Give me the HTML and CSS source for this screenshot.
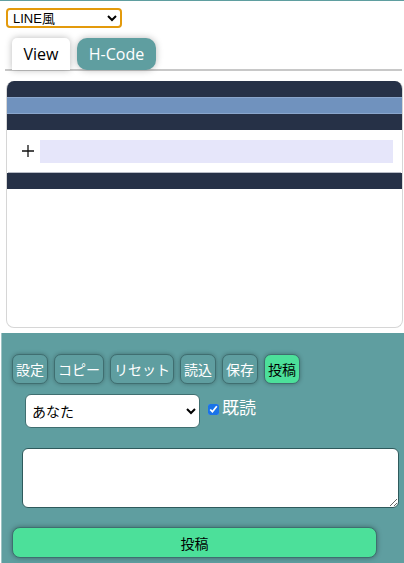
FILE: index.html
```html
<!DOCTYPE html>
<html lang="ja">
<head>
<meta charset="utf-8">
<link rel="stylesheet" href="styles.css">
</head>
<body>
<div class="topline"></div>
<select class="style-select"><option>LINE風</option></select>
<div class="tabs">
  <div class="tab tab-view">View</div>
  <div class="tab tab-code">H-Code</div>
</div>
<div class="panel">
  <div class="band dark"></div>
  <div class="band blue"></div>
  <div class="band dark"></div>
  <div class="row">
    <svg class="plus" width="12" height="12" viewBox="0 0 12 12"><path d="M6 0v12M0 6h12" stroke="#111" stroke-width="1.3" fill="none"/></svg>
    <div class="field"></div>
  </div>
  <div class="band dark"></div>
</div>
<div class="controls">
  <div class="btns">
    <button class="btn">設定</button>
    <button class="btn">コピー</button>
    <button class="btn">リセット</button>
    <button class="btn">読込</button>
    <button class="btn">保存</button>
    <button class="btn green">投稿</button>
  </div>
  <div class="who">
    <select class="who-select"><option>あなた</option></select>
    <label class="read"><input type="checkbox" checked>既読</label>
  </div>
  <textarea class="msg"></textarea>
  <button class="post">投稿</button>
</div>
</body>
</html>
```
FILE: styles.css
```css
* { box-sizing: border-box; }
html, body { margin: 0; padding: 0; background: #fff; }
body { font-family: "Segoe UI", "Open Sans", "Noto Sans CJK JP", sans-serif; width: 404px; height: 563px; overflow: hidden; }
.topline { height: 1px; background: #5f9ea0; }
.style-select {
  display: block; margin: 7px 0 0 6px; width: 116px; height: 20px;
  border: 2px solid #e39a0c; border-radius: 4px; background: #fff;
  font: 13px "Liberation Sans", "Noto Sans CJK JP", sans-serif; color: #000; padding: 0 1px;
}
.tabs {
  display: flex; gap: 7px; margin: 10px 2px 0 5px; padding-left: 7px;
  border-bottom: 2px solid #c8c8c8; height: 33px;
}
.tab { height: 32px; display: flex; align-items: center; justify-content: center; font-size: 16px; box-shadow: 0 0 7px rgba(0,0,0,.28); }
.tab-view { width: 58px; background: #fff; color: #000; border-radius: 5px 5px 0 0; }
.tab-code { width: 79px; background: #5f9ea0; color: #fff; border-radius: 10px; }
.panel {
  margin: 10px 1px 0 6px; height: 247px; border: 1px solid #d6d6d6; border-top: 0;
  border-radius: 8px; overflow: hidden; background: #fff;
}
.band { height: 16px; }
.dark { background: #263147; }
.blue { background: #7092be; border-top: 1px solid #8aa6cc; border-bottom: 1px solid #8aa6cc; height: 17px; }
.row { display: flex; align-items: center; height: 43px; background: #fff; margin: 0 1px; border-bottom: 1px solid #b8bcc6; padding: 0 8px 0 14px; }
.plus { width: 12px; height: 12px; margin-right: 6px; flex: none; }
.field { flex: 1; height: 23px; background: #e6e6fa; }
.controls {
  margin: 5px 0 0 1px; height: 231px; background: #5f9ea0; padding: 21px 0 0 10px;
  border-left: 1px solid #9cc2c3;
}
.btns { display: flex; gap: 6px; }
.btn {
  height: 30px; padding: 0 3px; border: 1px solid #3f6e70; border-radius: 7px;
  background: #5f9ea0; color: #fff; font: 14px "Noto Sans CJK JP", sans-serif;
  box-shadow: 0 0 4px rgba(0,0,0,.3);
}
.btn.green { background: #4ce09a; color: #000; }
.who { display: flex; align-items: flex-start; margin: 10px 0 0 13px; gap: 4px; }
.who-select {
  width: 175px; height: 34px; border: 1px solid #3f6e70; border-radius: 6px; background: #fff;
  font: 14px "Noto Sans CJK JP", sans-serif; color: #000; padding: 0 2px;
}
.read { display: flex; align-items: center; gap: 2px; color: #fff; font: 17px "Noto Sans CJK JP", sans-serif; margin-top: 0; }
.read input { width: 11px; height: 11px; margin: 5px 1px 0 4px; accent-color: #1a73e8; }
.msg {
  display: block; margin: 20px 0 0 10px; width: 377px; height: 60px; resize: both;
  border: 1px solid #2e5a5c; border-radius: 6px; background: #fff;
}
.post {
  display: block; margin: 19px 0 0 0; width: 365px; height: 31px;
  border: 1px solid #3f6e70; border-radius: 8px; background: #4ce09a; color: #000;
  font: 14px "Noto Sans CJK JP", sans-serif; box-shadow: 0 0 5px rgba(0,0,0,.35);
}
```
